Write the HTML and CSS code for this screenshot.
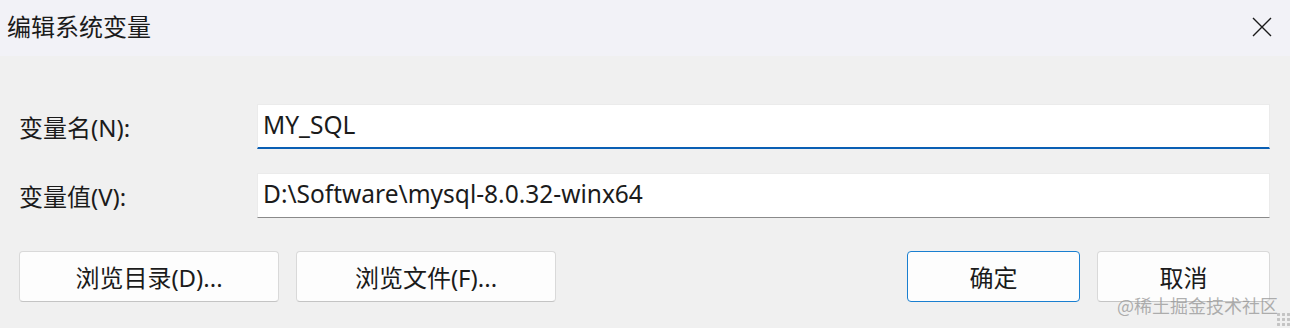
FILE: index.html
```html
<!DOCTYPE html>
<html lang="zh-CN">
<head>
    <meta charset="UTF-8">
    <title>编辑系统变量</title>
    <link rel="stylesheet" href="styles.css">
</head>
<body>
    <div class="dialog">
        <div class="titlebar">
            <span class="title">编辑系统变量</span>
            <button class="close" aria-label="关闭">
                <svg width="20" height="20" viewBox="0 0 20 20" fill="none" stroke="#1a1a1a" stroke-width="1.4"><path d="M1 1 19 19M19 1 1 19"/></svg>
            </button>
        </div>

        <div class="content">
            <div class="fields">
                <label class="field-label" for="varName">变量名(N):</label>
                <div class="field focused" id="varName">MY_SQL</div>
                <label class="field-label" for="varValue">变量值(V):</label>
                <div class="field" id="varValue">D:\Software\mysql-8.0.32-winx64</div>
            </div>

            <div class="actions">
                <button class="btn wide">浏览目录(D)...</button>
                <button class="btn wide">浏览文件(F)...</button>
                <span class="spacer"></span>
                <button class="btn narrow primary">确定</button>
                <button class="btn narrow">取消</button>
            </div>
        </div>

        <span class="watermark">@稀土掘金技术社区</span>
        <span class="grip"></span>
    </div>
</body>
</html>
```

FILE: styles.css
```css
:root {
    --window: #f0f0f0;
    --titlebar: #f2f2f7;
    --text: #1b1b1b;
    --accent: #0a5fb4;
    --border: #d9d9d9;
}

* {
    box-sizing: border-box;
    margin: 0;
    padding: 0;
}

body {
    font-family: "Noto Sans", "Noto Sans CJK SC", sans-serif;
    background: var(--window);
    color: var(--text);
    width: 1290px;
    height: 328px;
    overflow: hidden;
}

.dialog {
    position: relative;
    height: 328px;
}

.titlebar {
    height: 56px;
    background: var(--titlebar);
    display: flex;
    align-items: flex-start;
    justify-content: space-between;
    padding: 10px 18px 0 7px;
}

.title {
    font-family: "Noto Sans CJK SC", sans-serif;
    font-size: 24px;
    line-height: 32px;
}

.close {
    border: none;
    background: none;
    width: 20px;
    height: 20px;
    margin-top: 7px;
    display: flex;
}

.content {
    padding: 48px 20px 0 19px;
}

.fields {
    display: grid;
    grid-template-columns: 238px 1fr;
    row-gap: 24px;
    align-items: center;
}

.field-label {
    font-family: "Noto Sans", "Noto Sans CJK SC", sans-serif;
    font-size: 24px;
}

.field {
    height: 45px;
    background: #ffffff;
    border: 1px solid #ebebeb;
    border-bottom: 1px solid #8a8a8a;
    font-size: 24.5px;
    line-height: 40px;
    padding: 0 5px;
    white-space: nowrap;
}

.field.focused {
    border-bottom: 2px solid var(--accent);
}

.actions {
    display: flex;
    gap: 17px;
    margin-top: 33px;
}

.spacer {
    flex: 1;
}

.btn {
    height: 51px;
    background: #fdfdfd;
    border: 1px solid var(--border);
    border-bottom-color: #c4c4c4;
    border-radius: 4px;
    font-family: "Noto Sans", "Noto Sans CJK SC", sans-serif;
    font-size: 24px;
    color: var(--text);
}

.btn.wide {
    width: 260px;
}

.btn.narrow {
    width: 173px;
}

.btn.primary {
    border: 1px solid #1a7fd0;
}

.watermark {
    position: absolute;
    left: 1117px;
    top: 292px;
    font-family: "Noto Sans CJK SC", sans-serif;
    font-size: 18px;
    color: rgba(150, 150, 150, 0.75);
}

.grip {
    position: absolute;
    right: 0;
    bottom: 2px;
    width: 14px;
    height: 14px;
    background-image: radial-gradient(circle, #c4c4c4 1.4px, transparent 1.6px);
    background-size: 5px 5px;
}
```
